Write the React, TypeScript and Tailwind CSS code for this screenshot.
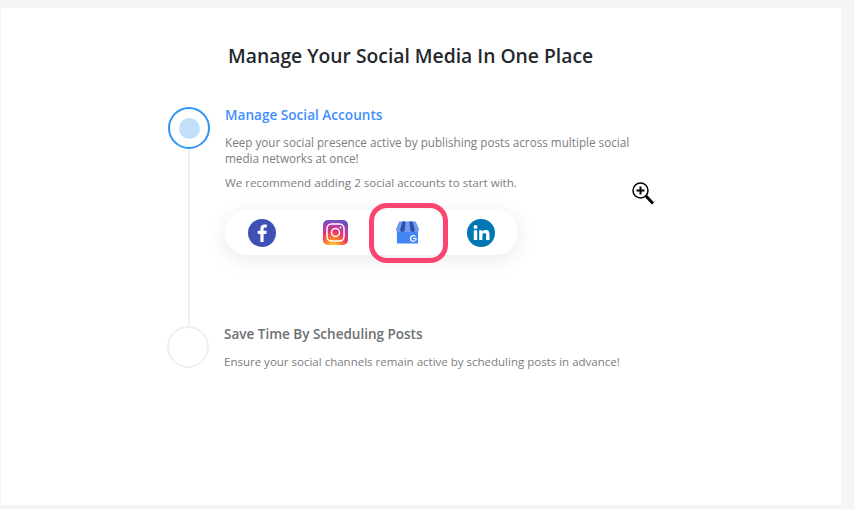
const font = { fontFamily: '"Open Sans", sans-serif' };

function FacebookIcon() {
  return (
    <svg width="28" height="28" viewBox="0 0 28 28">
      <circle cx="14" cy="14" r="14" fill="#3f51b5" />
      <path
        d="M15.6 23v-8h2.7l.4-3.2h-3.1V9.900c0-.9.3-1.500 1.600-1.500h1.600V5.600c-.3 0-1.300-.1-2.400-.1-2.400 0-4 1.400-4 4.100v2.200H9.700V15h2.700v8z"
        fill="#fff"
      />
    </svg>
  );
}

function InstagramIcon() {
  return (
    <svg width="25" height="25" viewBox="0 0 25 25">
      <defs>
        <radialGradient id="ig" cx="40%" cy="105%" r="110%">
          <stop offset="0" stopColor="#fdd835" />
          <stop offset="0.3" stopColor="#fb7a2e" />
          <stop offset="0.55" stopColor="#e8336f" />
          <stop offset="0.8" stopColor="#a63fb0" />
          <stop offset="1" stopColor="#5b58c8" />
        </radialGradient>
      </defs>
      <rect width="25" height="25" rx="5" fill="url(#ig)" />
      <rect x="4" y="4" width="17" height="17" rx="4.500" fill="none" stroke="#fff" strokeWidth="1.500" />
      <circle cx="12.500" cy="12.500" r="4" fill="none" stroke="#fff" strokeWidth="1.500" />
      <circle cx="17.500" cy="7.500" r="1" fill="#fff" />
    </svg>
  );
}

function BusinessIcon() {
  return (
    <svg width="25" height="23" viewBox="0 0 26 25">
      <path d="M1.500 10h23v13.500a1 1 0 0 1-1 1H2.500a1 1 0 0 1-1-1z" fill="#4285f4" />
      <path d="M4 0.500h18L25.500 9a3 3 0 0 1-3 3H3.500a3 3 0 0 1-3-3z" fill="#6f9bef" />
      <path d="M7.500 0.500h3.500L10 9.500a2.500 2.500 0 0 1-5 0zM15 0.500h3.500L21 9.500a2.500 2.500 0 0 1-5 0z" fill="#2f4fa8" />
      <path d="M21.500 17a3 3 0 1 0 0 4" fill="none" stroke="#fff" strokeWidth="1.300" />
      <path d="M19 19h3.200v2" fill="none" stroke="#fff" strokeWidth="1.200" />
    </svg>
  );
}

function LinkedinIcon() {
  return (
    <svg width="28" height="28" viewBox="0 0 28 28">
      <circle cx="14" cy="14" r="14" fill="#0077b5" />
      <circle cx="8.500" cy="8" r="2" fill="#fff" />
      <path
        d="M6.800 11.200h3.400V21H6.800zM12.200 11.200h3.200v1.400c.6-1 1.800-1.700 3.200-1.700 3 0 3.900 1.900 3.900 4.700V21h-3.400v-4.800c0-1.400-.4-2.300-1.600-2.300-1.300 0-2.100 1-2.100 2.400V21h-3.200z"
        fill="#fff"
      />
    </svg>
  );
}

function ZoomCursor() {
  return (
    <svg className="absolute left-[631px] top-[181px]" width="24" height="25" viewBox="0 0 24 25">
      <circle cx="9.500" cy="9.500" r="7.500" fill="#fff" stroke="#000" strokeWidth="1.500" />
      <path d="M5.500 9.500h8M9.500 5.500v8" stroke="#000" strokeWidth="2" />
      <path d="M15 15l7 7.500" stroke="#000" strokeWidth="3" />
    </svg>
  );
}

export default function App() {
  return (
    <div className="relative h-[509px] w-[854px] overflow-hidden bg-[#f5f5f7]" style={font}>
      <div className="ml-px mt-2 h-[497px] w-[840px] bg-white pt-[34px]">
        <h1 className="pl-[227px] text-[19.3px] font-semibold leading-[27px] text-[#24282d]">
          Manage Your Social Media In One Place
        </h1>

        <div className="mt-[38px] flex pl-[167px]">
          <div className="flex w-[42px] flex-col items-center">
            <div className="flex h-[42px] w-[42px] items-center justify-center rounded-full border-2 border-[#2d95f5]">
              <div className="h-[21px] w-[21px] rounded-full bg-[#c3e0fb]" />
            </div>
            <div className="h-[177px] w-0.5 bg-[#eeeff2]" />
          </div>
          <div className="ml-[15px] w-[416px]">
            <h2 className="mt-[-1px] text-[13.600px] font-semibold leading-[18px] text-[#3f8ffb]">
              Manage Social Accounts
            </h2>
            <p className="mt-[10px] text-[11.700px] leading-[16px] text-[#7a7e83]">
              Keep your social presence active by publishing posts across multiple social media
              networks at once!
            </p>
            <p className="mt-[9px] text-[11.600px] leading-[16px] text-[#7a7e83]">
              We recommend adding 2 social accounts to start with.
            </p>
            <div className="relative mt-[19px] flex h-[45px] w-[293px] items-center rounded-full bg-white pl-[23px] shadow-[0_4px_22px_rgba(0,0,0,0.09)]">
              <FacebookIcon />
              <div className="ml-[47px]">
                <InstagramIcon />
              </div>
              <div className="ml-[47px]">
                <BusinessIcon />
              </div>
              <div className="ml-[47px]">
                <LinkedinIcon />
              </div>
              <div className="absolute left-[144px] top-[-7px] h-[60px] w-[79px] rounded-[18px] border-[5px] border-[#fb4570]" />
            </div>
          </div>
        </div>

        <div className="flex pl-[166px]">
          <div className="h-[42px] w-[42px] rounded-full border-2 border-[#eeeff2]" />
          <div className="ml-[15px]">
            <h2 className="mt-[-1px] text-[13.500px] font-semibold leading-[18px] text-[#6b6f74]">
              Save Time By Scheduling Posts
            </h2>
            <p className="mt-[11px] text-[11.500px] leading-[16px] text-[#7a7e83]">
              Ensure your social channels remain active by scheduling posts in advance!
            </p>
          </div>
        </div>
      </div>
      <ZoomCursor />
    </div>
  );
}
